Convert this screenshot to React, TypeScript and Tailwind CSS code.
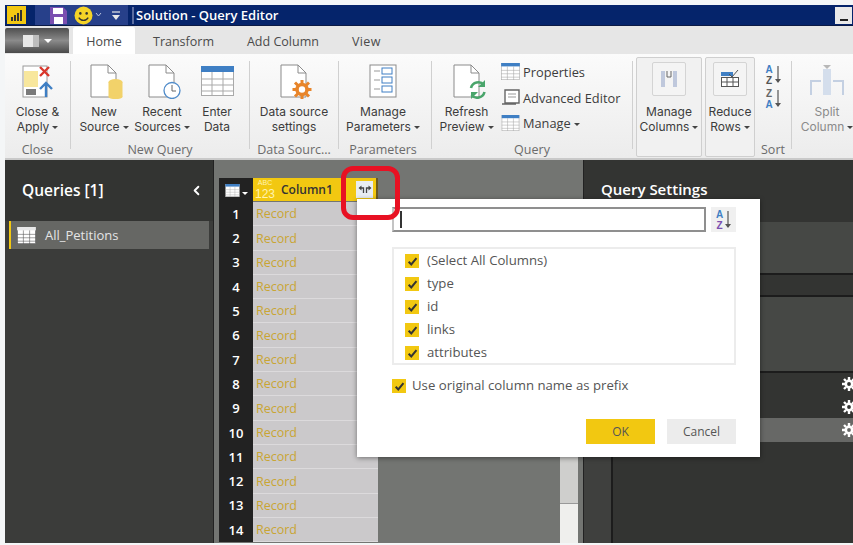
import { ChevronLeft } from "lucide-react";

const font = "font-['Open_Sans','Noto_Sans',sans-serif]";

const Caret = () => <span className="inline-block ml-[3px] align-middle w-0 h-0 border-x-[3px] border-x-transparent border-t-[3px] border-t-[#444]" />;

const RibbonBtn = ({ icon, l1, l2, w, caret, dim }: { icon: React.ReactNode; l1: string; l2: string; w: number; caret?: boolean; dim?: boolean }) => (
  <div className={`flex flex-col items-center shrink-0 ${dim ? "text-[#8a8a8a]" : "text-[#3c3c3c]"}`} style={{ width: w }}>
    <div className="h-[38px] mt-[8px] flex items-center justify-center">{icon}</div>
    <div className="mt-[4px] font-['Inter',sans-serif] text-[12px] text-center whitespace-nowrap">
      <div className="h-[15px] leading-[15px]">{l1}</div>
      <div className="h-[15px] leading-[15px]">
        {l2}
        {caret && <Caret />}
      </div>
    </div>
  </div>
);

const Group = ({ label, children, className }: { label: string; children: React.ReactNode; className?: string }) => (
  <div className={`flex flex-col items-center h-full shrink-0 ${className ?? ""}`}>
    <div className="flex flex-1 w-full">{children}</div>
    <div className="text-[12.5px] leading-[14px] mb-[1px] text-[#6b6b6b] whitespace-nowrap">{label}</div>
  </div>
);

const Sep = () => <div className="w-px h-[88px] mt-[7px] bg-[#d0d0d0] shrink-0" />;

const Doc = ({ children }: { children?: React.ReactNode }) => (
  <svg width="38" height="36" viewBox="0 0 38 36">
    <path d="M6 2h17l8 8v24H6z" fill="#fff" stroke="#8b8b8b" />
    <path d="M23 2v8h8" fill="none" stroke="#8b8b8b" />
    {children}
  </svg>
);

const TableIcon = ({ w = 33, h = 30, head = "#3f7fc4", line = "#a9a9a9" }: { w?: number; h?: number; head?: string; line?: string }) => (
  <svg width={w} height={h} viewBox="0 0 33 30">
    <rect x="0.5" y="0.5" width="32" height="29" fill="#fff" stroke={line} />
    <rect x="0" y="0" width="33" height="6" fill={head} />
    <path d="M0 13h33M0 19h33M0 25h33M11 6v24M22 6v24" stroke={line} />
  </svg>
);

const Gear = () => (
  <svg width="14" height="14" viewBox="0 0 14 14" className="shrink-0">
    <circle cx="7" cy="7" r="3.2" fill="none" stroke="#fff" strokeWidth="2.6" />
    <path d="M7 0v3M7 11v3M0 7h3M11 7h3M2 2l2 2M10 10l2 2M2 12l2-2M10 4l2-2" stroke="#fff" strokeWidth="2.4" />
  </svg>
);

const Check = () => (
  <span className="bg-[#f2c811] flex items-center justify-center shrink-0 w-[14px] h-[14px]">
    <svg width="11" height="11" viewBox="0 0 10 10">
      <path d="M1.5 5.2l2.4 2.5L8.6 2" fill="none" stroke="#333" strokeWidth="1.8" />
    </svg>
  </span>
);

const AzIcon = ({ down, top = "#3f7fc4", bottom = "#555" }: { down?: boolean; top?: string; bottom?: string }) => (
  <div className="flex items-center h-[24px]">
    <div className="flex flex-col font-['Liberation_Sans',sans-serif] text-[10px] font-bold w-[9px] items-center">
      <span className="h-[11px] leading-[11px]" style={{ color: down ? "#666" : top }}>
        {down ? "Z" : "A"}
      </span>
      <span className="h-[11px] leading-[11px]" style={{ color: down ? top : bottom }}>
        {down ? "A" : "Z"}
      </span>
    </div>
    <svg width="8" height="20" viewBox="0 0 8 20">
      <path d="M4 1v16" stroke="#555" strokeWidth="1.2" />
      <path d="M1 14h6l-3 4z" fill="#555" />
    </svg>
  </div>
);

const rows = Array.from({ length: 14 }, (_, i) => i + 1);
const cols = ["(Select All Columns)", "type", "id", "links", "attributes"];

export default function App() {
  return (
    <div className={`${font} relative w-[853px] h-[545px] overflow-hidden bg-[#f4f6f7] pl-[5px] pt-[5px] flex flex-col`}>
      {/* title bar */}
      <div className="h-[21px] bg-[#05246b] flex items-center shrink-0 border-b border-[#0b1a45]">
        <div className="w-[19px] h-[18px] bg-[#f2c811] ml-[2px] flex items-end justify-center gap-px pb-[3px] shrink-0">
          <i className="w-[2px] h-[4px] bg-[#333]" />
          <i className="w-[2px] h-[6px] bg-[#333]" />
          <i className="w-[2px] h-[8px] bg-[#333]" />
          <i className="w-[2px] h-[11px] bg-[#333]" />
        </div>
        <div className="ml-[9px] w-[93px] h-[20px] bg-[#27408a] flex items-center pl-[14px] shrink-0">
          <svg width="18" height="17" viewBox="0 0 18 17" className="shrink-0">
            <path d="M1 0h13l4 4v13H1z" fill="#7b4fb0" />
            <rect x="4" y="1" width="10" height="6" fill="#fff" />
            <rect x="5" y="10" width="9" height="7" fill="#fff" />
          </svg>
          <svg width="19" height="19" viewBox="0 0 18 18" className="shrink-0 ml-[7px]">
            <circle cx="9" cy="9" r="8.5" fill="#f5d327" />
            <circle cx="6" cy="7" r="1.2" fill="#333" />
            <circle cx="12" cy="7" r="1.2" fill="#333" />
            <path d="M4.5 11c2 3.5 7 3.5 9 0" fill="none" stroke="#333" strokeWidth="1.2" />
          </svg>
          <svg width="26" height="11" viewBox="0 0 26 11" className="shrink-0 ml-[2px]">
            <path d="M1 3l2.5 3L6 3" fill="none" stroke="#b9c2dc" />
            <path d="M17 2h8" stroke="#e8e8e8" strokeWidth="1.2" />
            <path d="M17 5h8l-4 5z" fill="#e8e8e8" />
          </svg>
        </div>
        <div className="w-[2px] h-[17px] bg-[#5a6ca0] ml-[4px] shrink-0" />
        <div className="ml-[2px] pt-[1px] text-white text-[13px] font-semibold leading-none">Solution - Query Editor</div>
        <div className="ml-auto w-[17px] h-[17px] bg-[#e9e9e9] flex items-end justify-center pb-[3px] mr-px">
          <i className="w-[8px] h-[2px] bg-[#222]" />
        </div>
      </div>

      {/* tabs */}
      <div className="h-[28px] bg-[#e6e6e6] flex items-end shrink-0 text-[12.5px] text-[#4a4a4a]">
        <div className="w-[64px] h-[25px] mb-px bg-linear-to-b from-[#4f4f4f] via-[#8b8b8b] to-[#4a4a4a] flex items-center justify-center gap-[5px] rounded-t-[2px]">
          <div className="w-[16px] h-[12px] bg-[#e8e8e8] border-r-[6px] border-[#bdbdbd]" />
          <span className="w-0 h-0 border-x-[4px] border-x-transparent border-t-[4px] border-t-white" />
        </div>
        <div className="ml-[4px] w-[62px] h-[27px] pt-[4px] bg-white rounded-t-[2px] flex items-center justify-center">Home</div>
        <div className="ml-[18px] h-[27px] pt-[4px] flex items-center">Transform</div>
        <div className="ml-[33px] h-[27px] pt-[4px] flex items-center">Add Column</div>
        <div className="ml-[33px] h-[27px] pt-[4px] flex items-center tracking-[0.4px]">View</div>
      </div>

      {/* ribbon */}
      <div className="h-[106px] bg-linear-to-b from-[#fbfbfb] to-[#ececec] flex shrink-0 border-b-2 border-[#c9c9c9] overflow-hidden">
        <Group label="Close" className="w-[65px]">
          <RibbonBtn
            w={65}
            l1="Close &"
            l2="Apply"
            caret
            icon={
              <svg width="32" height="36" viewBox="0 0 32 36">
                <rect x="1" y="3" width="24" height="31" fill="#fff" stroke="#9a9a9a" />
                <rect x="2" y="8" width="14" height="16" fill="#f8e79d" />
                <rect x="4" y="26" width="10" height="6" fill="#7a7a7a" />
                <path d="M18 4l9 9M27 4l-9 9" stroke="#d9372c" strokeWidth="2.4" />
                <path d="M24 34V21M18 26l6-6 6 6" fill="none" stroke="#3f7fc4" strokeWidth="2.4" />
              </svg>
            }
          />
        </Group>
        <Sep />
        <Group label="New Query" className="w-[178px]">
          <RibbonBtn
            w={66}
            l1="New"
            l2="Source"
            caret
            icon={
              <Doc>
                <ellipse cx="30.5" cy="19" rx="7" ry="3" fill="#f2d26a" />
                <rect x="23.5" y="19" width="14" height="15" fill="#f2d26a" />
                <ellipse cx="30.5" cy="34" rx="7" ry="2" fill="#f2d26a" />
              </Doc>
            }
          />
          <RibbonBtn
            w={50}
            l1="Recent"
            l2="Sources"
            caret
            icon={
              <Doc>
                <circle cx="29" cy="27.5" r="8" fill="#fff" stroke="#4f8bc9" strokeWidth="1.3" />
                <path d="M29 22v6h4" fill="none" stroke="#666" />
              </Doc>
            }
          />
          <RibbonBtn w={60} l1="Enter" l2="Data" icon={<TableIcon />} />
        </Group>
        <Sep />
        <Group label="Data Sourc..." className="w-[88px]">
          <RibbonBtn
            w={88}
            l1="Data source"
            l2="settings"
            icon={
              <Doc>
                <circle cx="27" cy="26.5" r="5" fill="#fff" stroke="#e8852a" strokeWidth="3.6" />
                <path d="M27 17v4M27 32v4M17.5 26.5h4M32.5 26.5h4M20 19.5l3 3M31 30.5l3 3M20 33.5l3-3M31 22.5l3-3" stroke="#e8852a" strokeWidth="3" />
              </Doc>
            }
          />
        </Group>
        <Sep />
        <Group label="Parameters" className="w-[92px] pr-[4px]">
          <RibbonBtn
            w={88}
            l1="Manage"
            l2="Parameters"
            caret
            icon={
              <svg width="28" height="34" viewBox="0 0 28 34">
                <rect x="1" y="1" width="26" height="32" fill="#fff" stroke="#8b8b8b" />
                <path d="M5 7h6M5 16h6M5 25h6" stroke="#999" />
                <rect x="13" y="4" width="10" height="6" fill="none" stroke="#3f7fc4" />
                <rect x="13" y="13" width="10" height="6" fill="none" stroke="#3f7fc4" />
                <rect x="13" y="22" width="10" height="6" fill="none" stroke="#3f7fc4" />
              </svg>
            }
          />
        </Group>
        <Sep />
        <Group label="Query" className="w-[200px]">
          <RibbonBtn
            w={69}
            l1="Refresh"
            l2="Preview"
            caret
            icon={
              <Doc>
                <path d="M23 25a7.5 7.5 0 0 1 13-3M36.5 29a7.5 7.5 0 0 1-13 3" fill="none" stroke="#4aa56b" strokeWidth="2.6" />
                <path d="M37 17v7h-7M23 36v-7h7" fill="#4aa56b" />
              </Doc>
            }
          />
          <div className="flex flex-col gap-[9px] mt-[9px] text-[12.8px] leading-[16px] text-[#3c3c3c] whitespace-nowrap">
            <div className="flex items-center gap-[3px]">
              <TableIcon w={19} h={17} head="#3f7fc4" />
              Properties
            </div>
            <div className="flex items-center gap-[3px]">
              <svg width="19" height="17" viewBox="0 0 19 17">
                <path d="M4 1h14v13H4zM1 15h14" fill="#fff" stroke="#666" strokeWidth="1.4" />
                <path d="M7 5h8M7 8h8" stroke="#999" />
              </svg>
              Advanced Editor
            </div>
            <div className="flex items-center gap-[3px]">
              <TableIcon w={19} h={16} />
              <span>
                Manage
                <Caret />
              </span>
            </div>
          </div>
        </Group>
        <Sep />
        <div className="h-[100px] w-[66px] ml-[3px] mt-[3px] bg-[#f1f1f1] border border-[#cfcfcf] rounded-[2px] shrink-0 -mb-[2px]">
          <div className="-mt-[4px]">
            <RibbonBtn
              w={64}
              l1="Manage"
              l2="Columns"
              caret
              icon={
                <div className="w-[34px] h-[34px] mb-[4px] border border-[#d4d4d4] rounded-[2px] bg-[#f4f4f4] flex items-center justify-center">
                  <svg width="20" height="20" viewBox="0 0 20 20">
                    <path d="M2 2h4v16H2zM14 2h4v16h-4z" fill="#bfc8dc" />
                    <path d="M8 2v6h4V2" fill="none" stroke="#666" />
                  </svg>
                </div>
              }
            />
          </div>
        </div>
        <div className="h-[100px] w-[50px] ml-[3px] mt-[3px] bg-[#f1f1f1] border border-[#cfcfcf] rounded-[2px] shrink-0">
          <div className="-mt-[4px]">
            <RibbonBtn
              w={48}
              l1="Reduce"
              l2="Rows"
              caret
              icon={
                <div className="w-[34px] h-[34px] mb-[4px] border border-[#d4d4d4] rounded-[2px] bg-[#f4f4f4] flex items-center justify-center">
                  <svg width="20" height="20" viewBox="0 0 20 20">
                    <rect x="1" y="3" width="12" height="4" fill="#3f7fc4" />
                    <rect x="1.5" y="8.5" width="17" height="9" fill="#fff" stroke="#555" />
                    <path d="M7 8v9M13 8v9M1 13h18M9 5l3 3 6-7" fill="none" stroke="#555" />
                  </svg>
                </div>
              }
            />
          </div>
        </div>
        <Group label="Sort" className="w-[36px]">
          <div className="flex flex-col items-center mt-[9px] w-[36px]">
            <AzIcon />
            <AzIcon down />
          </div>
        </Group>
        <Sep />
        <RibbonBtn
          w={70}
          dim
          l1="Split"
          l2="Column"
          caret
          icon={
            <svg width="34" height="36" viewBox="0 0 34 36">
              <path d="M13 6h8v26h-8z" fill="#d4deec" />
              <path d="M1 32V18h10M33 32V18H23" fill="none" stroke="#c4d0e2" strokeWidth="2" />
              <path d="M13 2h8l-4 4z" fill="#b8b8b8" />
            </svg>
          }
        />
      </div>

      {/* body */}
      <div className="flex flex-1 min-h-0 mb-[2px]">
        {/* queries pane */}
        <div className="w-[209px] bg-[#3b3c3a] shrink-0 border-r border-[#222]">
          <div className="h-[61px] bg-[#333432] flex items-center justify-between pl-[17px] pr-[9px] text-white text-[15.5px] font-semibold">
            Queries [1]
            <ChevronLeft size={15} strokeWidth={3} />
          </div>
          <div className="ml-[4px] mr-[4px] h-[28px] bg-[#666764] border-l-2 border-[#f2c811] flex items-center gap-[9px] pl-[6px] text-[#e4e4e4] text-[13px]">
            <TableIcon w={19} h={17} head="#e8e8e8" line="#555" />
            <span className="pt-[2px]">All_Petitions</span>
          </div>
        </div>

        {/* data grid */}
        <div className="w-[369px] bg-[#737572] shrink-0 pt-[18px] pl-[5px] flex flex-col relative">
          <div className="flex h-[24px] shrink-0">
            <div className="w-[34px] bg-[#222] flex items-center justify-center gap-px">
              <TableIcon w={17} h={13} head="#3f7fc4" />
              <span className="w-0 h-0 border-x-[3px] border-x-transparent border-t-[3px] border-t-white mt-[6px]" />
            </div>
            <div className="w-[125px] bg-[#f2c811] flex items-center border-r-2 border-[#6b5a20] mb-px">
              <div className="w-[22px] ml-px text-[#fff3b0] text-center font-['Liberation_Sans',sans-serif]">
                <div className="h-[8px] text-[7px] leading-[8px]">ABC</div>
                <div className="h-[14px] text-[12px] leading-[14px]">123</div>
              </div>
              <span className="ml-[5px] text-[#333] text-[12px] font-semibold">Column1</span>
              <div className="ml-auto mr-[3px] w-[17px] h-[17px] bg-[#e8edf2] flex items-center justify-center">
                <svg width="14" height="9" viewBox="0 0 14 9">
                  <path d="M5.5 8V3H3M8.5 8V3H11" fill="none" stroke="#444" strokeWidth="1.3" />
                  <path d="M3.5 0.5L0.5 3l3 2.5zM10.5 0.5l3 2.5-3 2.5z" fill="#444" />
                </svg>
              </div>
            </div>
          </div>
          {rows.map((n) => (
            <div key={n} className="flex h-[24.3px] shrink-0">
              <div className="w-[34px] bg-[#222] text-white text-[13px] font-semibold flex items-center justify-center pt-px">{n}</div>
              <div className="w-[125px] bg-[#cbc9cb] border-b border-[#dcdadc] text-[#c9a533] text-[12.5px] flex items-center pl-[3px] pt-[2px]">Record</div>
            </div>
          ))}
          {/* scrollbar */}
          <div className="absolute right-[5px] top-[260px] bottom-0 w-[18px] flex flex-col">
            <div className="h-[83px] bg-[#cfcfcd] shrink-0" />
            <div className="flex-1 bg-[#efefed] border-t border-[#999]" />
          </div>
        </div>

        {/* settings */}
        <div className="flex-1 bg-[#333432] border-l border-[#222] flex flex-col overflow-hidden">
          <div className="h-[62px] pl-[17px] pt-[19px] text-white text-[15px] font-semibold leading-[20px] shrink-0">Query Settings</div>
          <div className="h-[51px] bg-[#464845] shrink-0" />
          <div className="h-[24px] border-y-2 border-[#1c1c1c] shrink-0" />
          <div className="h-[74px] bg-[#464845] shrink-0" />
          <div className="border-t-2 border-[#1c1c1c] h-[24px] flex items-center justify-end shrink-0 -mr-[3px]">
            <Gear />
          </div>
          <div className="h-[23px] flex items-center justify-end shrink-0 -mr-[3px]">
            <Gear />
          </div>
          <div className="h-[24px] bg-[#676866] flex items-center justify-end shrink-0 -mr-[3px]">
            <Gear />
          </div>
          <div className="flex-1 flex">
            <div className="w-[29px] bg-[#3f403e] border-r-2 border-[#1c1c1c]" />
          </div>
        </div>
      </div>

      {/* expand dialog */}
      <div className="absolute left-[357px] top-[199px] w-[403px] h-[258px] bg-white shadow-[0_1px_5px_rgba(0,0,0,0.45)] text-[#555] text-[13.2px] pt-[8px] pl-[35px] pr-[24px]">
        <div className="flex items-start justify-between">
          <div className="w-[314px] h-[25px] border-2 border-[#8f8f8f] border-l-[#c4c4c4] flex items-center">
            <span className="w-[2px] h-[17px] ml-[6px] bg-[#333]" />
          </div>
          <div className="w-[25px] h-[25px] bg-[#f0f0f0] flex items-center justify-center">
            <AzIcon bottom="#7b4fb0" />
          </div>
        </div>
        <div className="mt-[15px] h-[118px] border-2 border-[#ececec] pt-[5px] pl-[11px] flex flex-col gap-[9px]">
          {cols.map((c) => (
            <div key={c} className="flex items-center gap-[8px] h-[14px]">
              <Check />
              {c}
            </div>
          ))}
        </div>
        <div className="mt-[14px] flex items-center gap-[6px] h-[14px]">
          <Check />
          Use original column name as prefix
        </div>
        <div className="mt-[26px] flex justify-end gap-[12px] text-[12px]">
          <div className="w-[69px] h-[25px] bg-[#f2c811] flex items-center justify-center">OK</div>
          <div className="w-[69px] h-[25px] bg-[#ececec] flex items-center justify-center">Cancel</div>
        </div>
      </div>

      {/* red highlight */}
      <div className="absolute left-[341px] top-[166px] w-[59px] h-[54px] border-[5px] border-[#e81123] rounded-[12px] pointer-events-none" />
    </div>
  );
}
